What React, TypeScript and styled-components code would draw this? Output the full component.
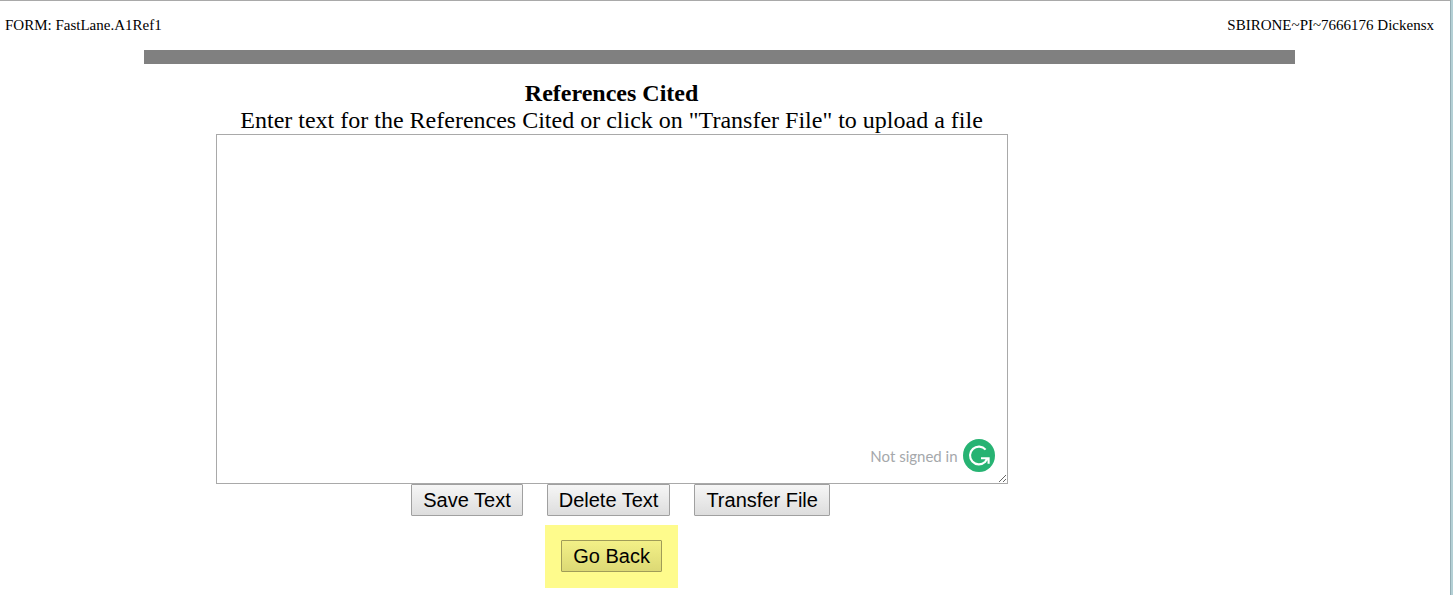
import React from "react";
import styled, { createGlobalStyle } from "styled-components";

const GlobalStyle = createGlobalStyle`
  *, *::before, *::after { box-sizing: border-box; }
  body {
    margin: 0;
    background: #fff;
    color: #000;
    font-family: "Liberation Serif", "Times New Roman", serif;
  }
`;

const Window = styled.div`
  border-right: 2px solid #b4d0d5;
`;

const Frame = styled.div`
  min-height: 100vh;
  border-top: 1px solid #a9a9a9;
  border-right: 1px solid #94adb4;
  padding-right: 11px;
`;

const TopLine = styled.header`
  display: flex;
  justify-content: space-between;
  padding: 15px 5px 0;
  font-size: 15px;
  line-height: 18px;
`;

const Divider = styled.hr`
  width: 80%;
  height: 14px;
  margin: 16px auto;
  border: 0;
  background: #808080;
`;

const Form = styled.form`
  display: flex;
  flex-direction: column;
  align-items: center;
  width: 85%;
`;

const Title = styled.h1`
  margin: 0;
  font-size: 24px;
  line-height: 27px;
`;

const Prompt = styled.label`
  font-size: 24px;
  line-height: 27px;
`;

const Editor = styled.div`
  position: relative;
  width: 792px;
  max-width: 100%;
`;

const TextBox = styled.textarea`
  display: block;
  width: 100%;
  height: 350px;
  padding: 2px;
  border: 1px solid #a9a9a9;
  background: #fff;
  font: 20px "Liberation Mono", monospace;
`;

const Assistant = styled.div`
  position: absolute;
  right: 13px;
  bottom: 12px;
  display: flex;
  align-items: center;
  gap: 5px;
  color: #a5a8ab;
  font: 15px/20px Lato, sans-serif;
`;

const Badge = styled.svg`
  display: block;
  width: 32px;
  height: 33px;
`;

const Actions = styled.div`
  display: flex;
  gap: 24px;
  padding-left: 18px;
`;

const Button = styled.button<{ $marked?: boolean }>`
  height: 32px;
  padding: 0 11px;
  border: 1px solid ${(p) => (p.$marked ? "#a09c58" : "#a0a0a0")};
  border-radius: 1px;
  background: ${(p) =>
    p.$marked
      ? "linear-gradient(#f3f087, #dcd975)"
      : "linear-gradient(#f6f6f6, #dddddd)"};
  color: #000;
  font: 20px/24px "Liberation Sans", Arial, sans-serif;
`;

const Highlight = styled.div`
  margin-top: 9px;
  padding: 15px 16px 16px;
  background: #fefb8c;
`;

export default function App() {
  return (
    <>
      <GlobalStyle />
      <Window>
        <Frame>
          <TopLine>
            <span>FORM: FastLane.A1Ref1</span>
            <span>SBIRONE~PI~7666176 Dickensx</span>
          </TopLine>
          <Divider />
          <Form onSubmit={(e) => e.preventDefault()}>
            <Title>References Cited</Title>
            <Prompt htmlFor="references">
              Enter text for the References Cited or click on "Transfer File" to upload a file
            </Prompt>
            <Editor>
              <TextBox id="references" spellCheck={false} />
              <Assistant>
                <span>Not signed in</span>
                <Badge viewBox="0 0 32 33" aria-hidden="true">
                  <ellipse cx="16" cy="16.5" rx="16" ry="16.5" fill="#27b373" />
                  <path
                    d="M22.6 10.6 A8.9 8.9 0 1 0 22 23 L24.2 19.6 M18 19.2 H25.6 V24.8"
                    fill="none"
                    stroke="#fff"
                    strokeWidth="2.1"
                  />
                </Badge>
              </Assistant>
            </Editor>
            <Actions>
              <Button type="button">Save Text</Button>
              <Button type="button">Delete Text</Button>
              <Button type="button">Transfer File</Button>
            </Actions>
            <Highlight>
              <Button type="button" $marked>Go Back</Button>
            </Highlight>
          </Form>
        </Frame>
      </Window>
    </>
  );
}
